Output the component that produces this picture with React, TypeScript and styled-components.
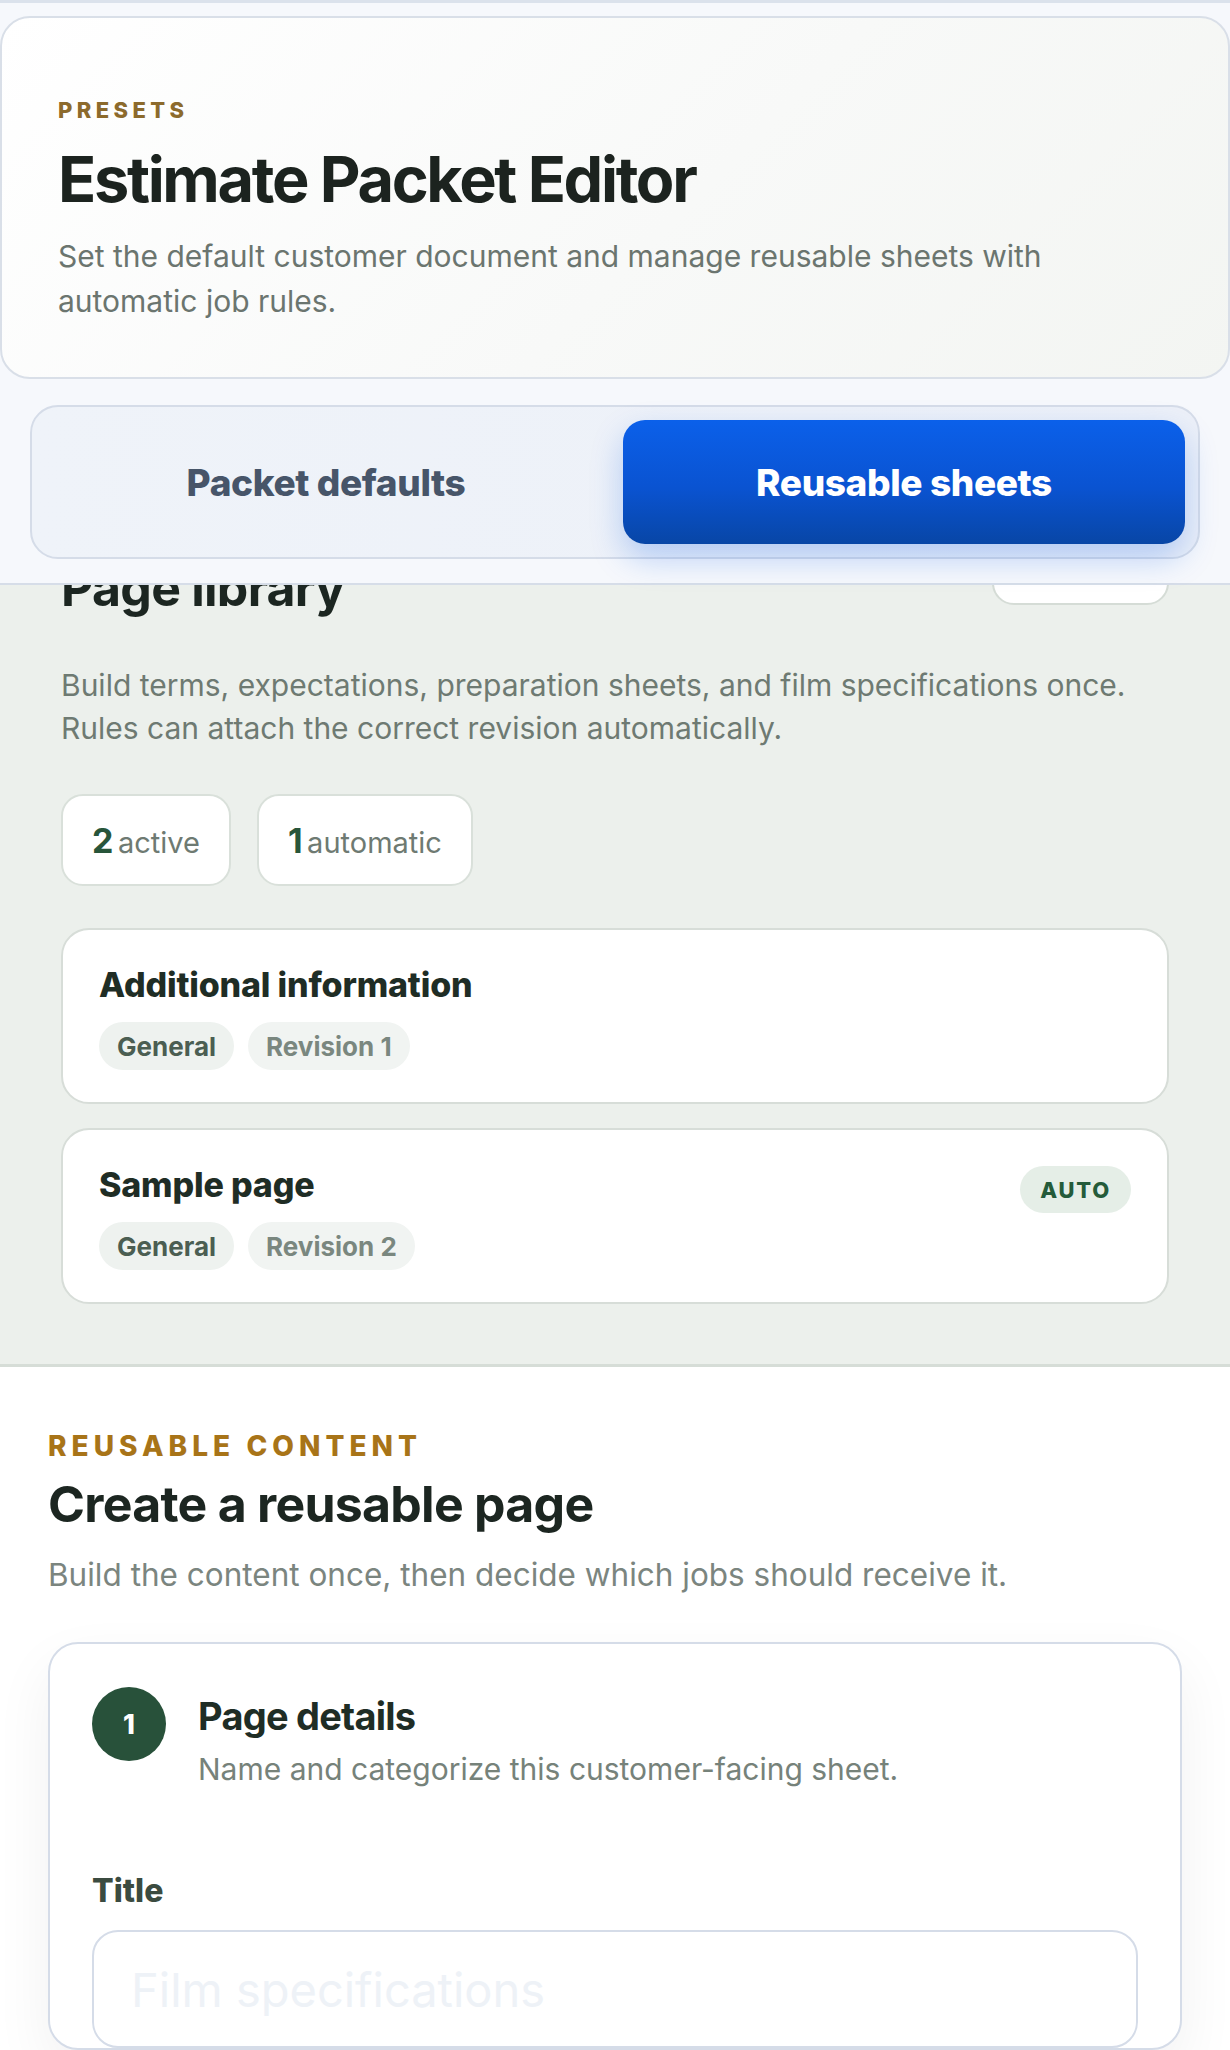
import React from 'react';
import styled, { createGlobalStyle } from 'styled-components';

const GlobalStyle = createGlobalStyle`
  * { box-sizing: border-box; }
  html, body { margin: 0; padding: 0; background: #ffffff; }
  body {
    font-family: Inter, "Noto Sans", "Liberation Sans", sans-serif;
    -webkit-font-smoothing: antialiased;
  }
`;

const Page = styled.div`
  width: 1230px;
  overflow: hidden;
`;

/* ---------- sticky top area ---------- */

const TopArea = styled.header`
  position: relative;
  z-index: 2;
  background: #f6f8fc;
  border-top: 3px solid #dbe2ec;
  border-bottom: 2px solid #d6dde8;
  padding: 13px 0 24px;
`;

const HeroCard = styled.section`
  border: 2px solid #d9dfe8;
  border-radius: 30px;
  background: linear-gradient(135deg, #ffffff 0%, #f8f9f8 55%, #f3f5f2 100%);
  padding: 79px 56px 53px 56px;
`;

const Eyebrow = styled.div<{ $size: number; $color: string; $spacing: number }>`
  font-size: ${(p) => p.$size}px;
  line-height: ${(p) => Math.round(p.$size * 1.2)}px;
  font-weight: 800;
  letter-spacing: ${(p) => p.$spacing}em;
  text-transform: uppercase;
  color: ${(p) => p.$color};
`;

const HeroTitle = styled.h1`
  margin: 22px 0 0;
  font-size: 63px;
  line-height: 69px;
  font-weight: 700;
  letter-spacing: -0.037em;
  color: #1c231f;
`;

const HeroText = styled.p`
  margin: 20px 0 0;
  max-width: 1060px;
  font-size: 30px;
  line-height: 45px;
  color: #6b756f;
`;

const Tabs = styled.nav`
  margin: 26px 30px 0;
  display: grid;
  grid-template-columns: 1fr 1fr;
  gap: 16px;
  padding: 13px;
  border: 2px solid #d5dce8;
  border-radius: 28px;
  background: linear-gradient(90deg, #eff3f9 0%, #ecf0f8 100%);
`;

const TabButton = styled.button<{ $active?: boolean }>`
  height: 124px;
  border: none;
  border-radius: 22px;
  font-family: inherit;
  font-size: 37px;
  font-weight: 800;
  letter-spacing: -0.01em;
  cursor: pointer;
  color: ${(p) => (p.$active ? '#ffffff' : '#475569')};
  background: ${(p) =>
    p.$active
      ? 'linear-gradient(180deg, #0b60ea 0%, #0a53d1 55%, #0846a6 100%)'
      : 'transparent'};
  box-shadow: ${(p) => (p.$active ? '0 14px 32px rgba(11, 92, 230, 0.26)' : 'none')};
`;

/* ---------- page library ---------- */

const LibrarySection = styled.section`
  background: #ecf0ec;
  border-bottom: 3px solid #d6ddd7;
  overflow: hidden;
  padding: 0 61px 60px;
`;

const LibraryHead = styled.div`
  margin-top: -61px;
  display: flex;
  align-items: center;
  justify-content: space-between;
`;

const HeadText = styled.div`
  padding-top: 34px;
`;

const SectionTitle = styled.h2`
  margin: 0;
  font-size: 50px;
  line-height: 60px;
  font-weight: 700;
  letter-spacing: -0.015em;
  color: #1c2621;
`;

const GhostButton = styled.button`
  min-width: 176px;
  height: 68px;
  padding: 0 28px;
  border: 2px solid #d5dcd6;
  border-radius: 22px;
  background: #ffffff;
  font-family: inherit;
  font-size: 24px;
  font-weight: 700;
  color: #28553a;
`;

const SectionText = styled.p<{ $size: number; $lh: number; $mt: number; $color: string; $max?: number }>`
  margin: ${(p) => p.$mt}px 0 0;
  max-width: ${(p) => (p.$max ? `${p.$max}px` : 'none')};
  font-size: ${(p) => p.$size}px;
  line-height: ${(p) => p.$lh}px;
  color: ${(p) => p.$color};
`;

const StatsRow = styled.div`
  margin-top: 44px;
  display: flex;
  gap: 26px;
`;

const StatPill = styled.div`
  height: 92px;
  padding: 0 29px;
  display: flex;
  align-items: center;
  border: 2px solid #d9e0da;
  border-radius: 22px;
  background: #ffffff;
  white-space: nowrap;
`;

const StatNum = styled.span`
  font-size: 34px;
  font-weight: 700;
  color: #28553a;
`;

const StatLabel = styled.span`
  font-size: 29px;
  color: #6e7a72;
`;

const SheetList = styled.div`
  margin-top: 42px;
  display: flex;
  flex-direction: column;
  gap: 24px;
`;

const SheetCard = styled.article`
  display: flex;
  align-items: flex-start;
  justify-content: space-between;
  padding: 33px 36px 32px;
  border: 2px solid #d7ddd8;
  border-radius: 28px;
  background: #ffffff;
`;

const SheetTitle = styled.h3`
  margin: 0;
  font-size: 34px;
  line-height: 44px;
  font-weight: 800;
  letter-spacing: -0.005em;
  color: #1f2d25;
`;

const ChipRow = styled.div`
  margin-top: 15px;
  display: flex;
  gap: 14px;
`;

const Chip = styled.span<{ $kind: 'category' | 'revision' }>`
  height: 48px;
  padding: 0 18px;
  display: inline-flex;
  align-items: center;
  border-radius: 999px;
  font-size: 26px;
  font-weight: 700;
  background: ${(p) => (p.$kind === 'category' ? '#eef2ef' : '#f1f4f2')};
  color: ${(p) => (p.$kind === 'category' ? '#4b5e52' : '#7a877f')};
`;

const AutoBadge = styled.span`
  margin-top: 3px;
  height: 47px;
  padding: 0 20px;
  display: inline-flex;
  align-items: center;
  border-radius: 999px;
  background: #e5eee7;
  color: #245b3a;
  font-size: 22px;
  font-weight: 800;
  letter-spacing: 0.08em;
`;

/* ---------- create section ---------- */

const CreateSection = styled.section`
  background: #ffffff;
  padding: 62px 48px 0;
`;

const CreateTitle = styled.h2`
  margin: 11px 0 0;
  font-size: 50px;
  line-height: 60px;
  font-weight: 700;
  letter-spacing: -0.015em;
  color: #1c2621;
`;

const StepCard = styled.div`
  margin-top: 45px;
  padding: 43px 42px 0;
  border: 2px solid #d5dce8;
  border-radius: 30px;
  background: #ffffff;
  box-shadow: 0 24px 60px rgba(15, 23, 42, 0.06);
`;

const StepHead = styled.div`
  display: flex;
  align-items: flex-start;
  gap: 32px;
`;

const StepNum = styled.div`
  flex-shrink: 0;
  width: 74px;
  height: 74px;
  border-radius: 50%;
  background: #28513a;
  color: #ffffff;
  display: flex;
  align-items: center;
  justify-content: center;
  font-size: 27px;
  font-weight: 800;
`;

const StepText = styled.div`
  padding-top: 6px;
`;

const StepTitle = styled.h3`
  margin: 0;
  font-size: 38px;
  line-height: 47px;
  font-weight: 700;
  letter-spacing: -0.02em;
  color: #1f2d25;
`;

const StepSub = styled.p`
  margin: 8px 0 0;
  font-size: 30px;
  line-height: 42px;
  color: #76827a;
`;

const Field = styled.label`
  margin-top: 81px;
  display: flex;
  flex-direction: column;
  gap: 19px;
`;

const FieldLabel = styled.span`
  font-size: 32px;
  line-height: 40px;
  font-weight: 800;
  color: #3b4b40;
`;

const TextInput = styled.input`
  width: 100%;
  height: 118px;
  padding: 0 37px;
  border: 2px solid #d5dce8;
  border-radius: 26px;
  background: #ffffff;
  font-family: inherit;
  font-size: 47px;
  color: #1f2d25;
  outline: none;
  &::placeholder {
    color: #eef2f7;
  }
`;

type Sheet = { title: string; category: string; revision: number; auto?: boolean };

const sheets: Sheet[] = [
  { title: 'Additional information', category: 'General', revision: 1 },
  { title: 'Sample page', category: 'General', revision: 2, auto: true },
];

export default function App() {
  return (
    <Page>
      <GlobalStyle />
      <TopArea>
        <HeroCard>
          <Eyebrow $size={22} $color="#8c6a2c" $spacing={0.2}>Presets</Eyebrow>
          <HeroTitle>Estimate Packet Editor</HeroTitle>
          <HeroText>
            Set the default customer document and manage reusable sheets with automatic job rules.
          </HeroText>
        </HeroCard>
        <Tabs>
          <TabButton>Packet defaults</TabButton>
          <TabButton $active>Reusable sheets</TabButton>
        </Tabs>
      </TopArea>

      <LibrarySection>
        <LibraryHead>
          <HeadText>
            <SectionTitle>Page library</SectionTitle>
          </HeadText>
          <GhostButton>New page</GhostButton>
        </LibraryHead>
        <SectionText $size={30} $lh={43} $mt={46} $color="#6e7a72" $max={1100}>
          Build terms, expectations, preparation sheets, and film specifications once. Rules can
          attach the correct revision automatically.
        </SectionText>
        <StatsRow>
          <StatPill>
            <span>
              <StatNum>2</StatNum> <StatLabel>active</StatLabel>
            </span>
          </StatPill>
          <StatPill>
            <span>
              <StatNum>1</StatNum> <StatLabel>automatic</StatLabel>
            </span>
          </StatPill>
        </StatsRow>
        <SheetList>
          {sheets.map((s) => (
            <SheetCard key={s.title}>
              <div>
                <SheetTitle>{s.title}</SheetTitle>
                <ChipRow>
                  <Chip $kind="category">{s.category}</Chip>
                  <Chip $kind="revision">Revision {s.revision}</Chip>
                </ChipRow>
              </div>
              {s.auto && <AutoBadge>AUTO</AutoBadge>}
            </SheetCard>
          ))}
        </SheetList>
      </LibrarySection>

      <CreateSection>
        <Eyebrow $size={28} $color="#a87418" $spacing={0.18}>Reusable content</Eyebrow>
        <CreateTitle>Create a reusable page</CreateTitle>
        <SectionText $size={31.5} $lh={44} $mt={19} $color="#7b857f">
          Build the content once, then decide which jobs should receive it.
        </SectionText>
        <StepCard>
          <StepHead>
            <StepNum>1</StepNum>
            <StepText>
              <StepTitle>Page details</StepTitle>
              <StepSub>Name and categorize this customer-facing sheet.</StepSub>
            </StepText>
          </StepHead>
          <Field>
            <FieldLabel>Title</FieldLabel>
            <TextInput placeholder="Film specifications" />
          </Field>
        </StepCard>
      </CreateSection>
    </Page>
  );
}
